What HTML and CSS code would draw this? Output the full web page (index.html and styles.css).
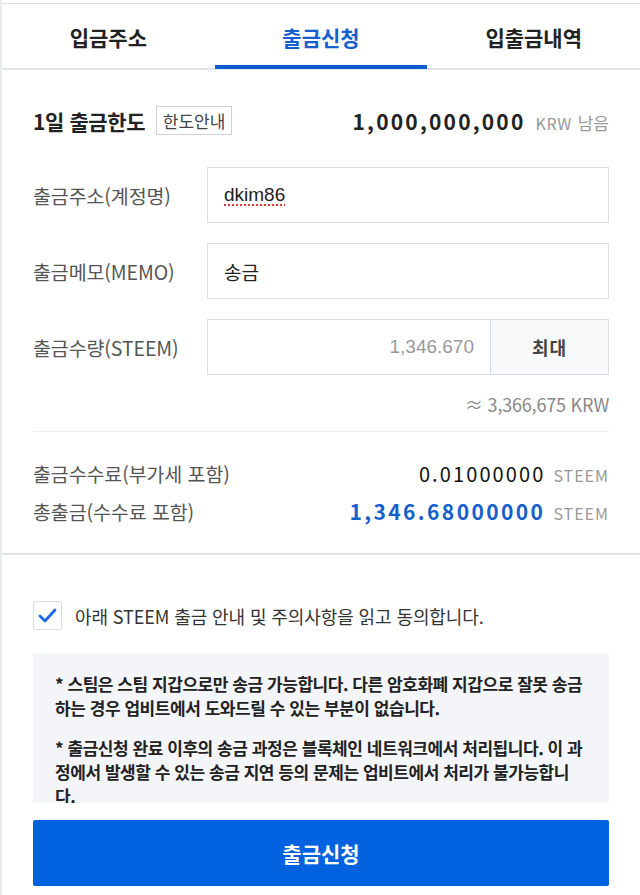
FILE: index.html
```html
<!DOCTYPE html>
<html lang="ko">
<head>
<meta charset="utf-8">
<title>출금신청</title>
<link rel="stylesheet" href="styles.css">
</head>
<body>
<div class="page">
  <nav class="tabs">
    <a class="tab">입금주소</a>
    <a class="tab active">출금신청</a>
    <a class="tab">입출금내역</a>
  </nav>

  <section class="form">
    <div class="limit-row">
      <div class="limit-title">
        <strong>1일 출금한도</strong>
        <span class="badge">한도안내</span>
      </div>
      <div class="limit-value"><b class="num">1,000,000,000</b><span class="unit">KRW</span><span class="remain">남음</span></div>
    </div>

    <div class="field-row">
      <label class="field-label">출금주소(계정명)</label>
      <div class="field-box"><span class="val spell">dkim86</span></div>
    </div>
    <div class="field-row">
      <label class="field-label">출금메모(MEMO)</label>
      <div class="field-box"><span class="val">송금</span></div>
    </div>
    <div class="field-row">
      <label class="field-label">출금수량(STEEM)</label>
      <div class="field-box amount">
        <span class="placeholder">1,346.670</span>
        <button class="max-btn">최대</button>
      </div>
    </div>
    <div class="krw">≈ 3,366,675 KRW</div>

    <div class="divider"></div>

    <div class="sum-row">
      <span class="sum-label">출금수수료(부가세 포함)</span>
      <span class="sum-value"><span class="fig">0.01000000</span><span class="coin">STEEM</span></span>
    </div>
    <div class="sum-row total">
      <span class="sum-label">총출금(수수료 포함)</span>
      <span class="sum-value"><span class="fig">1,346.68000000</span><span class="coin">STEEM</span></span>
    </div>
  </section>

  <section class="agree">
    <div class="check-row">
      <span class="checkbox">
        <svg width="19" height="15" viewBox="0 0 19 15"><path d="M2 8 L7 13 L17 2" fill="none" stroke="#1a6ae6" stroke-width="2.8" stroke-linecap="round" stroke-linejoin="round"/></svg>
      </span>
      <span class="check-text">아래 STEEM 출금 안내 및 주의사항을 읽고 동의합니다.</span>
    </div>

    <div class="notice">
      <p>* 스팀은 스팀 지갑으로만 송금 가능합니다. 다른 암호화폐 지갑으로 잘못 송금<br>하는 경우 업비트에서 도와드릴 수 있는 부분이 없습니다.</p>
      <p>* 출금신청 완료 이후의 송금 과정은 블록체인 네트워크에서 처리됩니다. 이 과<br>정에서 발생할 수 있는 송금 지연 등의 문제는 업비트에서 처리가 불가능합니<br>다.</p>
    </div>

    <button class="submit">출금신청</button>
  </section>
</div>
</body>
</html>
```

FILE: styles.css
```css
* { box-sizing: border-box; }
html, body { margin: 0; padding: 0; background: #fff; }
body {
  font-family: "Noto Sans CJK KR", "Noto Sans", sans-serif;
  color: #222;
  width: 640px;
  height: 895px;
  overflow: hidden;
}
.page {
  border-left: 2px solid #e9ebef;
  height: 895px;
  padding-top: 3px;
}
.tabs {
  display: flex;
  border-top: 1px solid #dcdee3;
  border-bottom: 2px solid #e1e3e7;
  height: 67px;
}
.tab {
  flex: 1;
  display: flex;
  align-items: center;
  justify-content: center;
  font-size: 21px;
  font-weight: 700;
  color: #222;
  position: relative;
  padding-top: 2px;
}
.tab.active { color: #1660cd; }
.tab.active::after {
  content: "";
  position: absolute;
  left: 0; right: 0; bottom: -1px;
  height: 4px;
  background: #0d5dd0;
}

.form {
  padding: 36px 31px 30px;
  border-bottom: 2px solid #e1e3e7;
}
.limit-row {
  display: flex;
  justify-content: space-between;
  align-items: center;
  height: 29px;
  margin-bottom: 32px;
}
.limit-title { display: flex; align-items: center; gap: 11px; }
.limit-title strong { font-size: 21px; font-weight: 700; color: #222; letter-spacing: -0.4px; }
.badge {
  display: inline-flex;
  align-items: center;
  justify-content: center;
  width: 76px;
  height: 29px;
  border: 1px solid #cfd1d6;
  font-size: 17px;
  color: #444;
}
.limit-value { display: flex; align-items: baseline; }
.limit-value .num { font-size: 21px; font-weight: 700; letter-spacing: 2.2px; color: #222; }
.limit-value .unit { font-size: 16px; color: #999; margin-left: 10px; letter-spacing: 0.5px; }
.limit-value .remain { font-size: 17px; color: #999; margin-left: 6px; }

.field-row {
  display: flex;
  align-items: center;
  margin-bottom: 20px;
}
.field-row:nth-of-type(4) { margin-bottom: 0; }
.field-label {
  width: 174px;
  font-size: 19.5px;
  color: #555;
  letter-spacing: -0.1px;
}
.field-box {
  flex: 1;
  height: 56px;
  border: 1px solid #dcdee3;
  display: flex;
  align-items: center;
  padding-left: 16px;
  font-family: "Liberation Sans", "Noto Sans CJK KR", sans-serif;
  font-size: 19px;
  color: #222;
}
.spell {
  text-decoration: underline dotted #e53935;
  text-decoration-thickness: 2px;
  text-underline-offset: 3px;
}
.field-box.amount { padding-left: 0; justify-content: flex-end; }
.placeholder { color: #999; flex: 1; text-align: right; padding-right: 16px; }
.max-btn {
  width: 118px;
  height: 100%;
  border: 0;
  border-left: 1px solid #dcdee3;
  background: #f8f9fb;
  font-family: "Noto Sans CJK KR", sans-serif;
  font-size: 18px;
  font-weight: 700;
  color: #444;
  letter-spacing: 1px;
}
.krw {
  text-align: right;
  font-size: 18px;
  color: #888;
  line-height: 24px;
  margin-top: 17px;
  letter-spacing: -0.2px;
}
.divider { height: 1px; background: #eceef1; margin-top: 15px; }
.sum-row {
  display: flex;
  justify-content: space-between;
  align-items: center;
  height: 24px;
  margin-top: 29px;
}
.sum-row.total { margin-top: 14px; }
.sum-label { font-size: 19.5px; color: #555; letter-spacing: -0.1px; }
.sum-value { display: flex; align-items: baseline; }
.sum-value .fig { font-size: 20px; color: #111; letter-spacing: 2.1px; }
.sum-row.total .fig { font-size: 21px; font-weight: 700; color: #1660cd; letter-spacing: 2.4px; }
.coin { font-size: 16px; color: #999; margin-left: 8px; letter-spacing: 1px; }

.agree { padding: 46px 31px 0; }
.check-row { display: flex; align-items: center; gap: 13px; }
.checkbox {
  width: 29px; height: 29px;
  border: 1px solid #dcdee3;
  border-radius: 2px;
  display: flex; align-items: center; justify-content: center;
}
.check-text { font-size: 18px; color: #333; letter-spacing: -0.1px; }
.notice {
  margin-top: 23px;
  height: 150px;
  overflow: hidden;
  background: #f4f5f8;
  padding: 19px 22px 0;
}
.notice p {
  margin: 0 0 16px;
  font-size: 17px;
  font-weight: 700;
  line-height: 24px;
  color: #222;
  letter-spacing: -0.45px;
}
.submit {
  display: block;
  width: 100%;
  height: 66px;
  margin-top: 17px;
  border: 0;
  border-radius: 2px;
  background: #0062df;
  color: #fff;
  font-family: "Noto Sans CJK KR", sans-serif;
  font-size: 21px;
  font-weight: 700;
}
```
